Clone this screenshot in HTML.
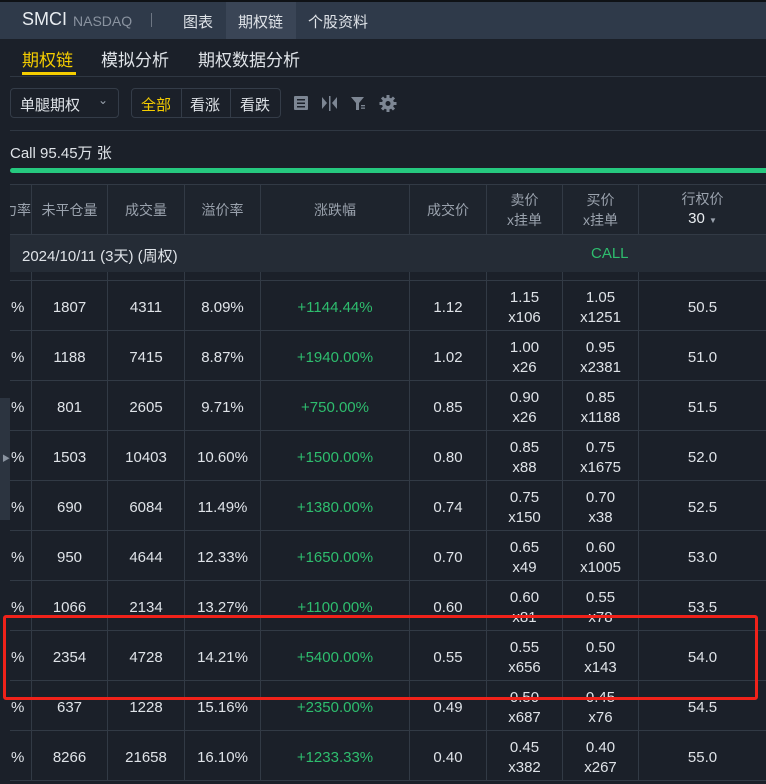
<!DOCTYPE html>
<html><head><meta charset="utf-8"><style>
*{margin:0;padding:0;box-sizing:border-box}
body{width:766px;height:784px;overflow:hidden;background:#1b2029;font-family:"Liberation Sans","Noto Sans CJK SC",sans-serif;color:#dfe3e8;position:relative}
.a{position:absolute}
.top{left:0;top:0;width:766px;height:2px;background:#0f1216}
.bar{left:0;top:2px;width:766px;height:37px;background:#2f3a4a}
.t{font-size:15px;top:11px}
.hl{left:226px;top:2px;width:70px;height:37px;background:#3a4556}
.line{height:1px;background:#2f3742;left:10px;width:756px}
.btn{border:1px solid #343c48;border-radius:4px;height:30px;top:88px}
.cell{position:absolute;display:flex;align-items:center;justify-content:center;flex-direction:column;font-size:15px;line-height:20px;border-right:1px solid #323a45;border-bottom:1px solid #323a45;text-align:center;white-space:nowrap;overflow:hidden}
.h{color:#9aa2ad;font-size:14px}
.g{color:#2ebd6e}
</style></head><body>
<div class="a top"></div>
<div class="a bar"></div>
<div class="a hl"></div>
<div class="a t" style="left:22px;font-size:18px;top:9px;color:#e8ecf0">SMCI</div>
<div class="a t" style="left:73px;font-size:14px;top:13px;color:#8a93a0">NASDAQ</div>
<div class="a" style="left:151px;top:13px;width:1px;height:14px;background:#6d7683"></div>
<div class="a t" style="left:183px">图表</div>
<div class="a t" style="left:238px">期权链</div>
<div class="a t" style="left:308px">个股资料</div>
<div class="a" style="left:22px;top:46px;font-size:17px;color:#f5cd00">期权链</div>
<div class="a" style="left:22px;top:72px;width:54px;height:3px;background:#f5cd00"></div>
<div class="a" style="left:101px;top:46px;font-size:17px">模拟分析</div>
<div class="a" style="left:198px;top:46px;font-size:17px">期权数据分析</div>
<div class="a line" style="top:76px"></div>
<div class="a btn" style="left:10px;width:109px"></div>
<div class="a" style="left:20px;top:94px;font-size:15px">单腿期权</div>
<div class="a" style="left:98px;top:93px;font-size:12px;color:#9aa2ad">⌄</div>
<div class="a btn" style="left:131px;width:150px"></div>
<div class="a" style="left:181px;top:89px;width:1px;height:28px;background:#343c48"></div>
<div class="a" style="left:230px;top:89px;width:1px;height:28px;background:#343c48"></div>
<div class="a" style="left:141px;top:94px;font-size:15px;color:#f5cd00">全部</div>
<div class="a" style="left:190px;top:94px;font-size:15px">看涨</div>
<div class="a" style="left:240px;top:94px;font-size:15px">看跌</div>
<svg class="a" style="left:293px;top:95px" width="110" height="17" fill="#7d8693">
<rect x="1" y="1" width="14" height="14" rx="1"/><rect x="4" y="4" width="8" height="1.5" fill="#1b2029"/><rect x="4" y="7.5" width="8" height="1.5" fill="#1b2029"/><rect x="4" y="11" width="8" height="1.5" fill="#1b2029"/>
<path d="M29 2 L34 8 L29 14Z M44 2 L39 8 L44 14Z"/><rect x="36" y="1" width="1.5" height="15"/>
<path d="M58 2 H71 L66 8 V15 L63 15 V8Z"/><rect x="68" y="10" width="4" height="1.3"/><rect x="68" y="12.5" width="4" height="1.3"/>
<g stroke="#7d8693" stroke-width="3"><line x1="95" y1="0" x2="95" y2="17"/><line x1="86.5" y1="8.5" x2="103.5" y2="8.5"/><line x1="89" y1="2.5" x2="101" y2="14.5"/><line x1="101" y1="2.5" x2="89" y2="14.5"/></g>
<circle cx="95" cy="8.5" r="6"/>
<circle cx="95" cy="8.5" r="2.5" fill="#1b2029"/>
</svg>
<div class="a line" style="top:130px"></div>
<div class="a" style="left:10px;top:142px;font-size:15px">Call 95.45万 张</div>
<div class="a" style="left:10px;top:168px;width:760px;height:5px;border-radius:3px;background:#26c97f"></div>
<div class="a" style="left:10px;top:184px;width:756px;height:1px;background:#323a45"></div>
<div class="a" style="left:0;top:398px;width:10px;height:122px;background:#2c3440"></div>
<div class="a" style="left:2px;top:453px;font-size:8px;color:#8a93a0">▶</div>
<div id="tb"></div>
<div class="a" style="left:10px;top:235px;width:756px;height:37px;background:#252c36"></div>
<div class="a" style="left:22px;top:245px;font-size:15px">2024/10/11 (3天) (周权)</div>
<div class="a g" style="left:591px;top:245px;font-size:15px">CALL</div>
<div class="a" style="left:3px;top:615px;width:755px;height:85px;border:3px solid #f0221a;border-radius:3px"></div>
<script>
var X=[10,32,108,185,261,410,487,563,639,766];
var H=[["h","力率"],["h","未平仓量"],["h","成交量"],["h","溢价率"],["h","涨跌幅"],["h","成交价"],["h","卖价<br>x挂单"],["h","买价<br>x挂单"],["s","行权价<br><span style='color:#e8ecf0;font-size:15px'>30 <span style='font-size:8px;color:#9aa2ad'>▼</span></span>"]];
var R=[["1807","4311","8.09%","+1144.44%","1.12","1.15<br>x106","1.05<br>x1251","50.5"],
["1188","7415","8.87%","+1940.00%","1.02","1.00<br>x26","0.95<br>x2381","51.0"],
["801","2605","9.71%","+750.00%","0.85","0.90<br>x26","0.85<br>x1188","51.5"],
["1503","10403","10.60%","+1500.00%","0.80","0.85<br>x88","0.75<br>x1675","52.0"],
["690","6084","11.49%","+1380.00%","0.74","0.75<br>x150","0.70<br>x38","52.5"],
["950","4644","12.33%","+1650.00%","0.70","0.65<br>x49","0.60<br>x1005","53.0"],
["1066","2134","13.27%","+1100.00%","0.60","0.60<br>x81","0.55<br>x78","53.5"],
["2354","4728","14.21%","+5400.00%","0.55","0.55<br>x656","0.50<br>x143","54.0"],
["637","1228","15.16%","+2350.00%","0.49","0.50<br>x687","0.45<br>x76","54.5"],
["8266","21658","16.10%","+1233.33%","0.40","0.45<br>x382","0.40<br>x267","55.0"]];
var s="";
function c(i,top,h,html,cls,ex){var br=i==8?"border-right:none;":"";s+='<div class="cell '+(cls||"")+'" style="left:'+X[i]+'px;top:'+top+'px;width:'+(X[i+1]-X[i])+'px;height:'+h+'px;'+br+(ex||"")+'">'+html+'</div>';}
for(var i=0;i<9;i++){c(i,185,50,H[i][1],"h",i==0?"align-items:flex-end;background:#1e242d":"background:#1e242d");}
for(var i=0;i<9;i++)c(i,271,10,"","","");
for(var r=0;r<10;r++){var row=["%"].concat(R[r]);for(var i=0;i<9;i++){c(i,281+50*r,50,row[i],i==4?"g":"","padding-top:5px;"+(i==0?"align-items:flex-start;padding-left:1px":""));}}
document.getElementById("tb").innerHTML=s;
</script>
</body></html>
